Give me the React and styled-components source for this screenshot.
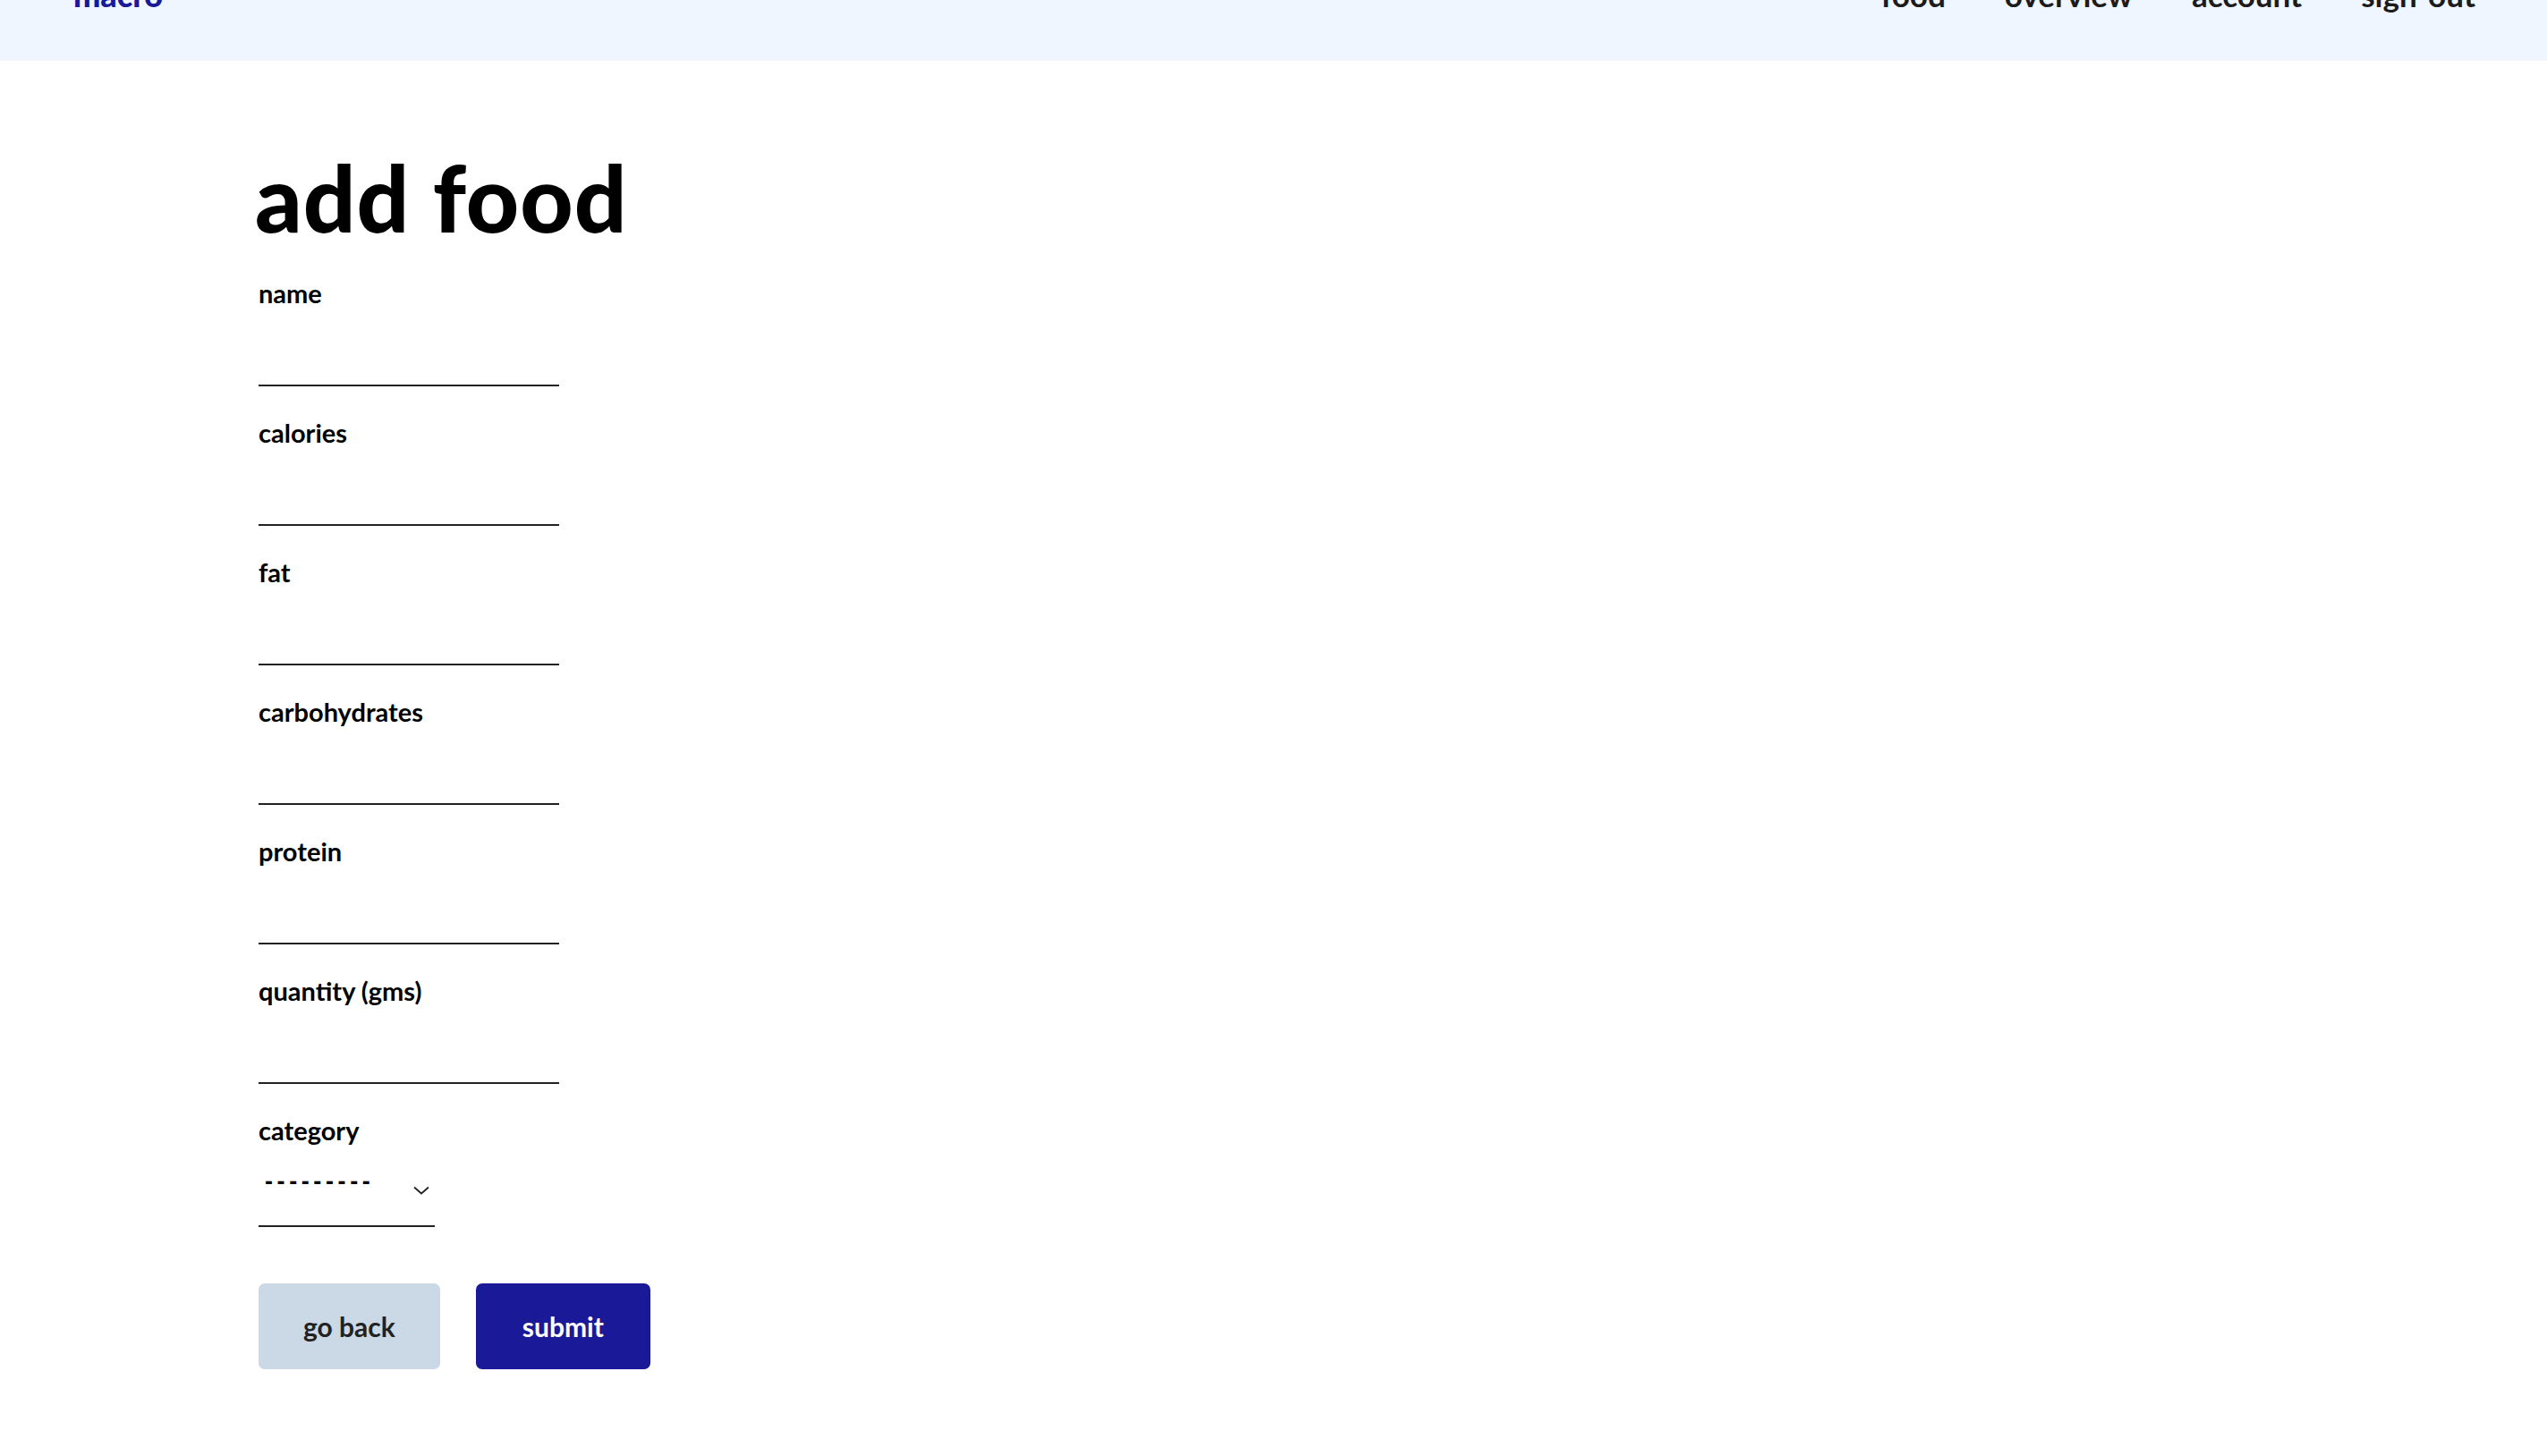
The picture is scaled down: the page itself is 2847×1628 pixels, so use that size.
import React from "react";
import styled, { createGlobalStyle } from "styled-components";

const GlobalStyle = createGlobalStyle`
  html, body { margin: 0; padding: 0; background: #ffffff; }
  body { font-family: "Lato", "Liberation Sans", sans-serif; color: #000; overflow: hidden; }
  * { box-sizing: border-box; }
`;

const Page = styled.div`
  min-height: 1628px;
  display: flex;
  flex-direction: column;
`;

const Header = styled.header`
  height: 148px;
  margin-top: -80px;
  padding: 0 80px 0 82px;
  background: #eff6ff;
  display: flex;
  align-items: center;
  justify-content: space-between;
`;

const Logo = styled.div`
  font-family: "Lato", sans-serif;
  font-weight: 900;
  font-size: 36px;
  line-height: 1;
  color: #1a1a99;
`;

const Nav = styled.nav`
  display: flex;
  align-items: center;
  gap: 66px;
`;

const NavLink = styled.a`
  font-family: "Lato", sans-serif;
  font-weight: 700;
  font-size: 35px;
  line-height: 1;
  color: #1c1c1c;
  text-decoration: none;
  word-spacing: 4px;
`;

const Main = styled.main`
  padding: 0 0 0 289px;
  display: flex;
  flex-direction: column;
`;

const Title = styled.h1`
  margin: 101px 0 0 -4px;
  font-family: "Lato", sans-serif;
  font-weight: 900;
  font-size: 103px;
  line-height: 1;
  letter-spacing: 1px;
`;

const Form = styled.form`
  display: flex;
  flex-direction: column;
  margin-top: 38px;
`;

const Field = styled.div`
  display: flex;
  flex-direction: column;
  margin-bottom: 34px;
`;

const Label = styled.label`
  font-family: "Lato", sans-serif;
  font-weight: 700;
  font-size: 29px;
  line-height: 36px;
  color: #000;
`;

const Input = styled.input`
  width: 336px;
  height: 86px;
  border: none;
  border-bottom: 2px solid #222;
  background: transparent;
  outline: none;
  font-size: 28px;
  font-family: "Lato", sans-serif;
`;

const SelectBox = styled.div`
  width: 197px;
  height: 90px;
  display: flex;
  align-items: center;
  border-bottom: 2px solid #222;
  padding-right: 6px;
`;

const Select = styled.select`
  appearance: none;
  flex: 1;
  border: none;
  background: transparent;
  outline: none;
  font-family: "Liberation Sans", sans-serif;
  font-weight: 700;
  font-size: 27px;
  letter-spacing: 4.6px;
  color: #000;
  padding: 0 0 8px 7px;
  margin-top: -2px;
`;

const Chevron = styled.svg`
  width: 18px;
  height: 10px;
  flex: none;
  margin-top: 10px;
`;

const Buttons = styled.div`
  display: flex;
  gap: 40px;
  margin-top: 29px;
`;

const Button = styled.button`
  height: 96px;
  padding: 0 ${(p) => (p.$primary ? "52px" : "50px")};
  border: none;
  border-radius: 7px;
  background: ${(p) => (p.$primary ? "#1a1a99" : "#cbd8e5")};
  color: ${(p) => (p.$primary ? "#ffffff" : "#222222")};
  font-family: "Lato", sans-serif;
  font-weight: 700;
  font-size: 30px;
  cursor: pointer;
`;

const fields = ["name", "calories", "fat", "carbohydrates", "protein", "quantity (gms)"];

export default function App() {
  return (
    <Page>
      <GlobalStyle />
      <Header>
        <Logo>macro</Logo>
        <Nav>
          <NavLink href="#">food</NavLink>
          <NavLink href="#">overview</NavLink>
          <NavLink href="#">account</NavLink>
          <NavLink href="#">sign out</NavLink>
        </Nav>
      </Header>
      <Main>
        <Title>add food</Title>
        <Form onSubmit={(e) => e.preventDefault()}>
          {fields.map((f) => (
            <Field key={f}>
              <Label>{f}</Label>
              <Input type="text" />
            </Field>
          ))}
          <Field>
            <Label>category</Label>
            <SelectBox>
              <Select defaultValue="">
                <option value="">---------</option>
              </Select>
              <Chevron viewBox="0 0 18 10" fill="none">
                <path d="M1 1.5 L9 8.5 L17 1.5" stroke="#222" strokeWidth="1.8" />
              </Chevron>
            </SelectBox>
          </Field>
          <Buttons>
            <Button type="button">go back</Button>
            <Button type="submit" $primary>submit</Button>
          </Buttons>
        </Form>
      </Main>
    </Page>
  );
}
